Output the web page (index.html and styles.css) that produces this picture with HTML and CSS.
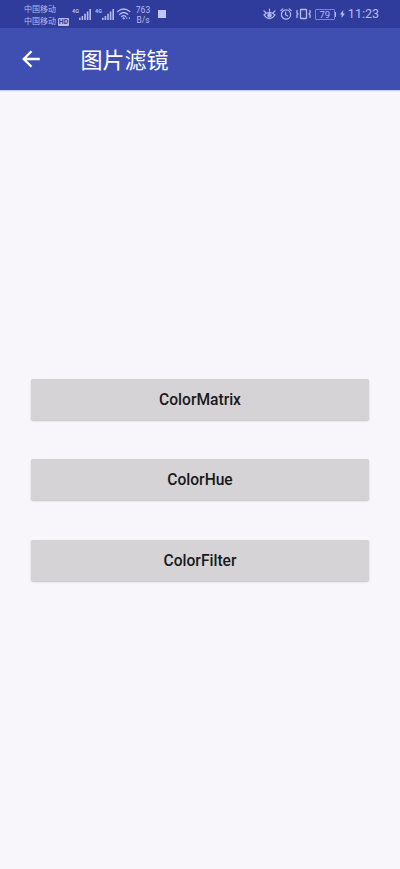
FILE: index.html
```html
<!DOCTYPE html>
<html lang="zh-CN">
<head>
<meta charset="utf-8">
<title>图片滤镜</title>
<link rel="stylesheet" href="styles.css">
</head>
<body>
<header class="status">
  <div class="carriers">
    <div>中国移动</div>
    <div class="carrier-row">中国移动<span class="hd">HD</span></div>
  </div>
  <div class="signal">
    <span class="gen">4G</span>
    <svg width="12" height="11" viewBox="0 0 12 11" fill="currentColor"><path d="M0 8.800h1.600v2.200H0zM2.600 7h1.600v4H2.600zM5.200 4.800h1.600V11H5.200zM7.800 2.500h1.600V11H7.800zM10.400 0H12v11h-1.600z"/></svg>
  </div>
  <div class="signal signal-second">
    <span class="gen">4G</span>
    <svg width="12" height="11" viewBox="0 0 12 11" fill="currentColor"><path d="M0 8.800h1.600v2.200H0zM2.600 7h1.600v4H2.600zM5.200 4.800h1.600V11H5.200zM7.800 2.500h1.600V11H7.800zM10.400 0H12v11h-1.600z"/></svg>
  </div>
  <svg class="wifi" width="14" height="12" viewBox="0 0 14 12" fill="none" stroke="currentColor" stroke-width="1.300" stroke-linecap="round"><path d="M.7 3.600Q6.700-1.600 12.800 3.600M2.700 6.200Q6.700 2.700 10.800 6.200M4.700 8.500Q6.700 6.800 8.700 8.500"/><circle cx="6.700" cy="10.300" r=".5" fill="currentColor"/><path d="M9.800 9.800v.8M12.300 9.800v.8" stroke-width="1"/></svg>
  <div class="speed"><div>763</div><div>B/s</div></div>
  <span class="square"></span>
  <div class="tray">
    <svg width="13" height="12" viewBox="0 0 13 12" fill="none" stroke="currentColor" stroke-width="1.200" stroke-linecap="round"><path d="M1 7Q6.500 1.800 12 7Q6.500 14.200 1 7zM1 2.800l1.600 1.700M6.500 1v2.300M12 2.800l-1.600 1.700"/><circle cx="6.500" cy="7.300" r="1.600" fill="currentColor"/></svg>
    <svg width="12" height="12" viewBox="0 0 12 12" fill="none" stroke="currentColor" stroke-width="1.200" stroke-linecap="round"><circle cx="6" cy="6.500" r="4.600"/><path d="M.8 2.600L2.800.9M11.200 2.600L9.200.9M5.600 4.200v2.500l1.900 1.200"/></svg>
    <svg width="15" height="12" viewBox="0 0 15 12" fill="none" stroke="currentColor"><rect x="4.500" y="1.500" width="6" height="9" rx=".5" stroke-width="1.300"/><path d="M1 2v3l1 1-1 1v3M14 2v3l-1 1 1 1v3" stroke-width="1.300"/></svg>
    <div class="battery">79</div>
    <svg class="bolt" width="5" height="8" viewBox="0 0 5 8" fill="currentColor"><path d="M3.200 0L0 4.600h1.700L1.500 8 5 3.400H3.100z"/></svg>
    <time>11:23</time>
  </div>
</header>
<nav class="appbar">
  <svg class="back" width="18" height="18" viewBox="0 0 18 18" fill="none" stroke="currentColor" stroke-width="2.300"><path d="M17.800 9H2M9.500 1.200L1.700 9l7.800 7.800"/></svg>
  <h1>图片滤镜</h1>
</nav>
<main>
  <button>ColorMatrix</button>
  <button>ColorHue</button>
  <button>ColorFilter</button>
</main>
</body>
</html>
```
FILE: styles.css
```css
* { box-sizing: border-box; }
body {
  margin: 0;
  height: 869px;
  display: flex;
  flex-direction: column;
  background: #f8f6fa;
  font-family: Roboto, "Noto Sans CJK SC", sans-serif;
}
svg { display: block; flex: none; }
.status {
  height: 28px;
  flex: none;
  display: flex;
  align-items: center;
  padding: 0 21px 0 24px;
  background: #303c9c;
  color: #b5bbed;
}
.carriers {
  width: 48px;
  padding-top: 3px;
  font-size: 8px;
  line-height: 12px;
  white-space: nowrap;
}
.carrier-row { display: flex; align-items: center; }
.hd {
  margin-left: 2px;
  width: 11px;
  height: 8px;
  border-radius: 1px;
  background: #b5bbed;
  color: #303c9c;
  font-size: 7px;
  font-weight: 700;
  line-height: 8px;
  text-align: center;
}
.signal { display: flex; width: 20px; height: 11px; }
.signal-second { margin-left: 3px; }
.gen { width: 7px; flex: none; font-size: 5.5px; font-weight: 700; line-height: 5px; }
.wifi { margin-left: 2px; }
.speed {
  margin-left: 4px;
  width: 16px;
  font-size: 8.5px;
  line-height: 10px;
  text-align: center;
  padding-top: 1px;
}
.square { width: 8px; height: 8px; margin-left: 7px; background: #c3c8f3; }
.tray { margin-left: auto; display: flex; align-items: center; gap: 4px; }
.battery {
  position: relative;
  width: 20px;
  height: 11px;
  border: 1px solid #7c85cc;
  border-radius: 1px;
  font-size: 9.5px;
  line-height: 9px;
  text-align: center;
}
.battery::after {
  content: "";
  position: absolute;
  left: 19px;
  top: 2px;
  width: 1.5px;
  height: 5px;
  background: currentColor;
}
.bolt { margin-right: -1px; margin-left: 1px; }
time { font-size: 12.5px; line-height: 14px; }
.appbar {
  height: 62px;
  flex: none;
  display: flex;
  align-items: center;
  padding-left: 22px;
  background: #3f4fb1;
  color: #fff;
  box-shadow: 0 1px 1px #9aa5e680;
}
h1 {
  margin: 4px 0 0 40.5px;
  font-size: 22px;
  line-height: 30px;
  font-weight: 400;
}
main {
  flex: 1;
  display: flex;
  flex-direction: column;
  justify-content: center;
  gap: 39.5px;
  padding: 0 31px;
}
button {
  height: 41px;
  padding: 2px 0 0;
  border: 0;
  border-radius: 2px;
  background: #d5d3d6;
  color: #19191b;
  font: 500 15.6px/39px Roboto, sans-serif;
  box-shadow: 0 1px 2px #00000038;
}
```
